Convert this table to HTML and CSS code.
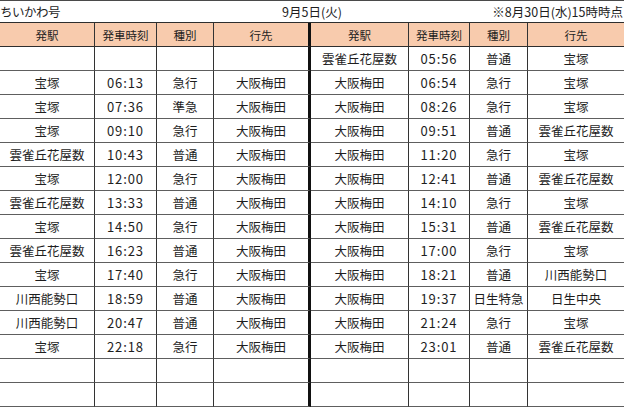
FILE: index.html
```html
<!DOCTYPE html>
<html lang="ja">
<head>
<meta charset="utf-8">
<link rel="stylesheet" href="styles.css">
</head>
<body>
<div class="sheet">
  <div class="title">
    <span class="t-left">ちいかわ号</span>
    <span class="t-mid">9月5日(火)</span>
    <span class="t-right">※8月30日(水)15時時点</span>
  </div>
  <div class="grid">
    <div class="c h">発駅</div><div class="c h">発車時刻</div><div class="c h">種別</div><div class="c h mid">行先</div>
    <div class="c h">発駅</div><div class="c h">発車時刻</div><div class="c h">種別</div><div class="c h last">行先</div>

    <div class="c"></div><div class="c tm"></div><div class="c"></div><div class="c mid"></div>
    <div class="c">雲雀丘花屋数</div><div class="c tm">05:56</div><div class="c">普通</div><div class="c last">宝塚</div>

    <div class="c">宝塚</div><div class="c tm">06:13</div><div class="c">急行</div><div class="c mid">大阪梅田</div>
    <div class="c">大阪梅田</div><div class="c tm">06:54</div><div class="c">急行</div><div class="c last">宝塚</div>

    <div class="c">宝塚</div><div class="c tm">07:36</div><div class="c">準急</div><div class="c mid">大阪梅田</div>
    <div class="c">大阪梅田</div><div class="c tm">08:26</div><div class="c">急行</div><div class="c last">宝塚</div>

    <div class="c">宝塚</div><div class="c tm">09:10</div><div class="c">急行</div><div class="c mid">大阪梅田</div>
    <div class="c">大阪梅田</div><div class="c tm">09:51</div><div class="c">普通</div><div class="c last">雲雀丘花屋数</div>

    <div class="c">雲雀丘花屋数</div><div class="c tm">10:43</div><div class="c">普通</div><div class="c mid">大阪梅田</div>
    <div class="c">大阪梅田</div><div class="c tm">11:20</div><div class="c">急行</div><div class="c last">宝塚</div>

    <div class="c">宝塚</div><div class="c tm">12:00</div><div class="c">急行</div><div class="c mid">大阪梅田</div>
    <div class="c">大阪梅田</div><div class="c tm">12:41</div><div class="c">普通</div><div class="c last">雲雀丘花屋数</div>

    <div class="c">雲雀丘花屋数</div><div class="c tm">13:33</div><div class="c">普通</div><div class="c mid">大阪梅田</div>
    <div class="c">大阪梅田</div><div class="c tm">14:10</div><div class="c">急行</div><div class="c last">宝塚</div>

    <div class="c">宝塚</div><div class="c tm">14:50</div><div class="c">急行</div><div class="c mid">大阪梅田</div>
    <div class="c">大阪梅田</div><div class="c tm">15:31</div><div class="c">普通</div><div class="c last">雲雀丘花屋数</div>

    <div class="c">雲雀丘花屋数</div><div class="c tm">16:23</div><div class="c">普通</div><div class="c mid">大阪梅田</div>
    <div class="c">大阪梅田</div><div class="c tm">17:00</div><div class="c">急行</div><div class="c last">宝塚</div>

    <div class="c">宝塚</div><div class="c tm">17:40</div><div class="c">急行</div><div class="c mid">大阪梅田</div>
    <div class="c">大阪梅田</div><div class="c tm">18:21</div><div class="c">普通</div><div class="c last">川西能勢口</div>

    <div class="c">川西能勢口</div><div class="c tm">18:59</div><div class="c">普通</div><div class="c mid">大阪梅田</div>
    <div class="c">大阪梅田</div><div class="c tm">19:37</div><div class="c">日生特急</div><div class="c last">日生中央</div>

    <div class="c">川西能勢口</div><div class="c tm">20:47</div><div class="c">普通</div><div class="c mid">大阪梅田</div>
    <div class="c">大阪梅田</div><div class="c tm">21:24</div><div class="c">急行</div><div class="c last">宝塚</div>

    <div class="c">宝塚</div><div class="c tm">22:18</div><div class="c">急行</div><div class="c mid">大阪梅田</div>
    <div class="c">大阪梅田</div><div class="c tm">23:01</div><div class="c">普通</div><div class="c last">雲雀丘花屋数</div>

    <div class="c"></div><div class="c tm"></div><div class="c"></div><div class="c mid"></div>
    <div class="c"></div><div class="c tm"></div><div class="c"></div><div class="c last"></div>

    <div class="c"></div><div class="c tm"></div><div class="c"></div><div class="c mid"></div>
    <div class="c"></div><div class="c tm"></div><div class="c"></div><div class="c last"></div>
  </div>
</div>
</body>
</html>
```
FILE: styles.css
```css
html, body {
  margin: 0;
  padding: 0;
  background: #ffffff;
}
body {
  font-family: "Noto Sans CJK JP", "Noto Sans", sans-serif;
  color: #1e1e1e;
}
.sheet {
  width: 624px;
  height: 408px;
  overflow: hidden;
}
.title {
  box-sizing: border-box;
  height: 22px;
  border-top: 1px solid #4a4a4a;
  display: grid;
  grid-template-columns: 1fr auto 1fr;
  align-items: center;
  font-size: 12.5px;
  line-height: 21px;
}
.t-left {
  justify-self: start;
  letter-spacing: -0.5px;
}
.t-mid {
  justify-self: center;
}
.t-right {
  justify-self: end;
  padding-right: 1px;
}
.grid {
  display: grid;
  grid-template-columns: 95px 62px 57px 97px 98px 61px 58px 96px;
  grid-auto-rows: 24px;
  border-top: 1px solid #2e2e2e;
}
.c {
  box-sizing: border-box;
  border-right: 1px solid #333333;
  border-bottom: 1px solid #5e5e5e;
  display: flex;
  align-items: center;
  justify-content: center;
  font-size: 12.5px;
  white-space: nowrap;
  overflow: hidden;
}
.tm {
  font-size: 13px;
  letter-spacing: 0.9px;
}
.h {
  background: #f8cbad;
  font-size: 11.5px;
  border-bottom: 1px solid #2e2e2e;
}
.mid {
  border-right: 3px solid #111111;
}
.last {
  border-right: none;
}
```
